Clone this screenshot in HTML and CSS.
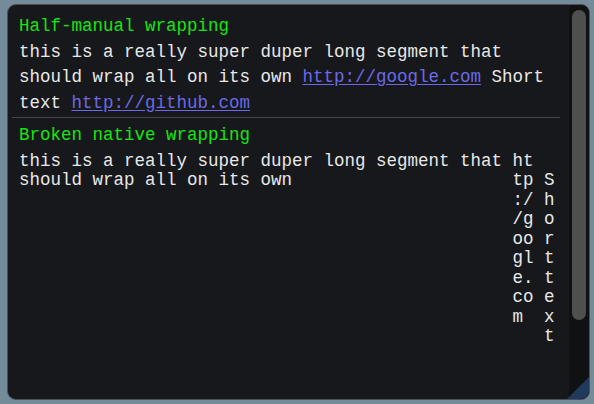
FILE: index.html
```html
<!DOCTYPE html>
<html lang="en">
<head>
    <meta charset="UTF-8">
    <meta name="viewport" content="width=device-width, initial-scale=1.0">
    <title>Text wrapping</title>
    <link rel="stylesheet" href="styles.css">
</head>
<body>
    <div class="window">
        <div class="content">
            <div class="heading">Half-manual wrapping</div>
            <div class="line">this is a really super duper long segment that</div>
            <div class="line">should wrap all on its own <a class="link" href="#">http://google.com</a> Short</div>
            <div class="line">text <a class="link" href="#">http://github.com</a></div>

            <div class="separator"></div>

            <div class="heading">Broken native wrapping</div>
            <div class="broken">
                <div class="broken-text">this is a really super duper long segment that should wrap all on its own</div>
                <div class="broken-col">ht<br>tp<br>:/<br>/g<br>oo<br>gl<br>e.<br>co<br>m</div>
                <div class="broken-col narrow">S<br>h<br>o<br>r<br>t<br>t<br>e<br>x<br>t</div>
            </div>
        </div>
        <div class="scrollbar">
            <div class="scroll-grab"></div>
        </div>
        <div class="resize-grip"></div>
    </div>
</body>
</html>
```

FILE: styles.css
```css
body {
    margin: 0;
    padding: 4px 4px 4px 7px;
    background: #748c99;
    font-family: "Liberation Mono", monospace;
    font-size: 17.5px;
    line-height: 19.5px;
    color: #e8e8e8;
}
.window {
    position: relative;
    display: flex;
    box-sizing: border-box;
    width: 583px;
    height: 396px;
    background: #17181b;
    border: 1px solid #4e4f57;
    border-radius: 9px;
    overflow: hidden;
}
.content {
    flex: 1;
    padding: 12px 9px 0 11px;
}
.heading {
    color: #14e614;
    margin-bottom: 6px;
}
.line {
    margin-bottom: 6px;
    white-space: nowrap;
}
.link {
    color: #6a6ae6;
    text-decoration: underline;
    text-underline-offset: 2px;
}
.separator {
    height: 1px;
    background: #45464d;
    margin: -2px 0 8px -7px;
}
.broken {
    display: flex;
    align-items: flex-start;
}
.broken-text {
    width: 46ch;
}
.broken-col {
    width: 2ch;
    margin-left: 1ch;
    white-space: nowrap;
}
.broken-col.narrow {
    width: 1ch;
    margin-top: 19.5px;
}
.scrollbar {
    width: 20px;
    background: #101112;
    padding: 5px 3px 0 3px;
    box-sizing: border-box;
}
.scroll-grab {
    height: 310px;
    background: #4f4f4f;
    border-radius: 7px;
}
.resize-grip {
    position: absolute;
    right: 0;
    bottom: 0;
    width: 22px;
    height: 22px;
    background: #203a5c;
    clip-path: polygon(100% 0, 100% 100%, 0 100%);
}
```
